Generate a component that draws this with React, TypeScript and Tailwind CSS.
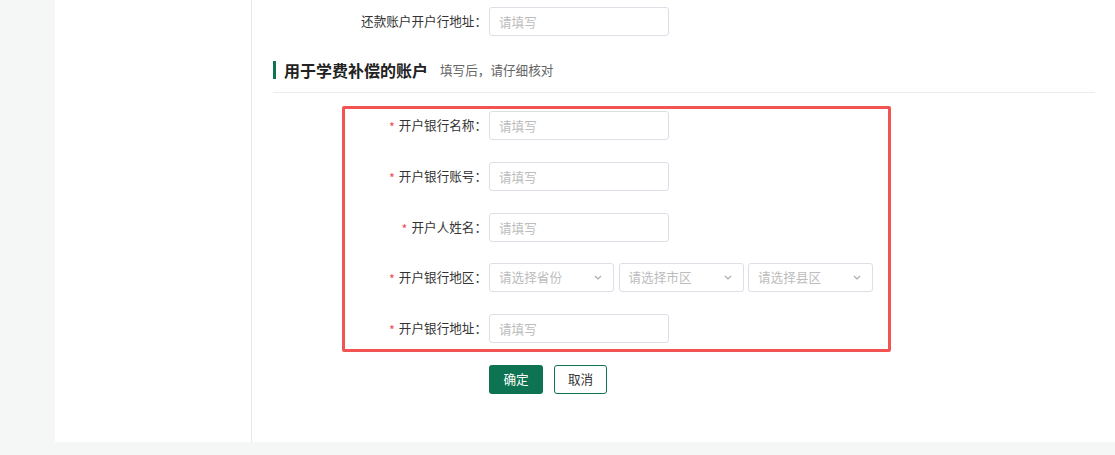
import React from "react";

const Input = () => (
  <input
    readOnly
    placeholder="请填写"
    className="w-[180px] h-[29px] border border-[#dcdfe6] rounded-[3px] pl-[9px] text-[12.6px] text-[#333] outline-none placeholder:text-[#bcbcbc] bg-white"
  />
);

const Select = ({ text }: { text: string }) => (
  <div className="w-[125px] h-[29px] border border-[#dcdfe6] rounded-[3px] pl-[9px] pr-[11px] flex items-center justify-between bg-white">
    <span className="text-[12.6px] text-[#bcbcbc]">{text}</span>
    <svg width="8" height="5" viewBox="0 0 8 5" fill="none">
      <path d="M1 1l3 3 3-3" stroke="#a8abb2" strokeWidth="1.1" />
    </svg>
  </div>
);

const Label = ({ text, req = true }: { text: string; req?: boolean }) => (
  <div className="w-[235px] text-right text-[12.6px] text-[#333] leading-none shrink-0 -translate-y-[0.5px]">
    {req && <span className="inline-block text-[#f0494f] mr-[4px] translate-y-[2px]">*</span>}
    {text}：
  </div>
);

export default function App() {
  return (
    <div className="w-[1115px] h-[455px] bg-[#f5f7f6] flex flex-col font-['Noto_Sans_CJK_SC','Noto_Sans',sans-serif] overflow-hidden">
      <div className="flex h-[442px] ml-[55px] bg-white">
        <div className="w-[197px] border-r border-[#e6e6e6] shrink-0" />
        <div className="flex-1 flex flex-col pt-[7px] pr-[20px]">
          <div className="flex items-center h-[29px]">
            <Label text="还款账户开户行地址" req={false} />
            <div className="ml-[2px]">
              <Input />
            </div>
          </div>

          <div className="flex items-center h-[18px] mt-[25px] ml-[21px]">
            <div className="w-[3px] h-[18px] bg-[#0e7352]" />
            <div className="ml-[8px] text-[16px] font-bold text-[#222] leading-none">用于学费补偿的账户</div>
            <div className="ml-[12px] text-[12.6px] text-[#666] leading-none">填写后，请仔细核对</div>
          </div>

          <div className="mt-[13px] ml-[21px] h-px bg-[#ebebeb]" />

          <div className="relative mt-[18px] flex flex-col gap-[21.75px]">
            <div className="flex items-center h-[29px]">
              <Label text="开户银行名称" />
              <div className="ml-[2px]"><Input /></div>
            </div>
            <div className="flex items-center h-[29px]">
              <Label text="开户银行账号" />
              <div className="ml-[2px]"><Input /></div>
            </div>
            <div className="flex items-center h-[29px]">
              <Label text="开户人姓名" />
              <div className="ml-[2px]"><Input /></div>
            </div>
            <div className="flex items-center h-[29px]">
              <Label text="开户银行地区" />
              <div className="ml-[2px] flex gap-[4.5px]">
                <Select text="请选择省份" />
                <Select text="请选择市区" />
                <Select text="请选择县区" />
              </div>
            </div>
            <div className="flex items-center h-[29px]">
              <Label text="开户银行地址" />
              <div className="ml-[2px]"><Input /></div>
            </div>
            <div className="flex items-center h-[29px] ml-[237px] gap-[11px]">
              <button className="w-[54px] h-[29px] rounded-[3px] bg-[#0e7352] text-white text-[12.6px]">确定</button>
              <button className="w-[53px] h-[29px] rounded-[3px] border border-[#0e7352] bg-white text-[#333] text-[12.6px]">取消</button>
            </div>

            <div className="absolute left-[90px] top-[-5px] w-[549px] h-[246px] border-[3px] border-[#f25454] rounded-[2px] pointer-events-none" />
          </div>
        </div>
      </div>
    </div>
  );
}
